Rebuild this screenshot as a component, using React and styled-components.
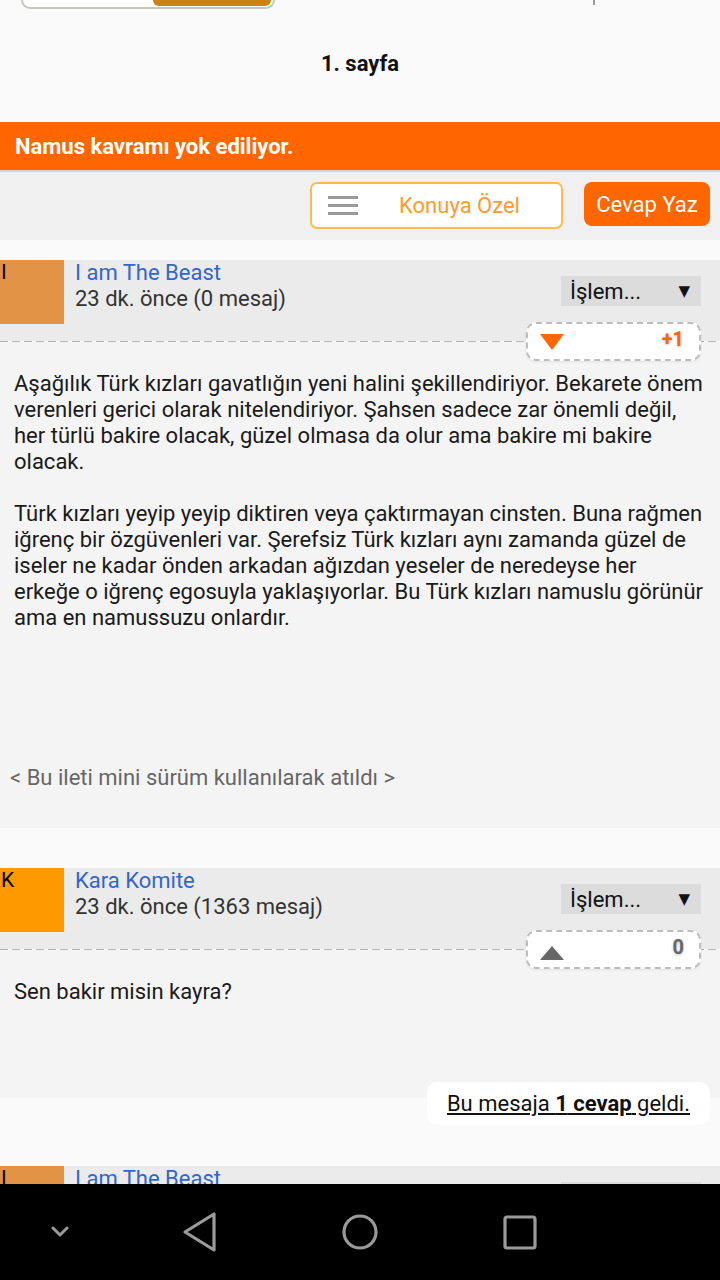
import React from "react";
import styled, { createGlobalStyle } from "styled-components";

const GlobalStyle = createGlobalStyle`
  body {
    margin: 0;
    font-family: Roboto, "Liberation Sans", sans-serif;
    background: #fafafa;
  }
`;

const posts = [
  {
    letter: "I",
    avatar: "#e39346",
    name: "I am The Beast",
    meta: "23 dk. önce (0 mesaj)",
    vote: "+1",
    down: true,
    height: 486,
    paragraphs: [
      "Aşağılık Türk kızları gavatlığın yeni halini şekillendiriyor. Bekarete önem verenleri gerici olarak nitelendiriyor. Şahsen sadece zar önemli değil, her türlü bakire olacak, güzel olmasa da olur ama bakire mi bakire olacak.",
      "Türk kızları yeyip yeyip diktiren veya çaktırmayan cinsten. Buna rağmen iğrenç bir özgüvenleri var. Şerefsiz Türk kızları aynı zamanda güzel de iseler ne kadar önden arkadan ağızdan yeseler de neredeyse her erkeğe o iğrenç egosuyla yaklaşıyorlar. Bu Türk kızları namuslu görünür ama en namussuzu onlardır.",
    ],
    footer: "< Bu ileti mini sürüm kullanılarak atıldı >",
  },
  {
    letter: "K",
    avatar: "#ff9900",
    name: "Kara Komite",
    meta: "23 dk. önce (1363 mesaj)",
    vote: "0",
    down: false,
    height: 148,
    paragraphs: ["Sen bakir misin kayra?"],
    replies: 1,
  },
  {
    letter: "I",
    avatar: "#e39346",
    name: "I am The Beast",
    meta: "23 dk. önce (0 mesaj)",
    vote: "0",
    down: false,
    height: 148,
    paragraphs: [],
  },
];

function App() {
  return (
    <Screen>
      <GlobalStyle />
      <Content>
        <PagerRow>
          <Pager>
            <PagerActive />
          </Pager>
          <PagerTick />
        </PagerRow>
        <PageLabel>1. sayfa</PageLabel>
        <TitleBar>Namus kavramı yok ediliyor.</TitleBar>
        <Toolbar>
          <TopicButton>
            <Burger>
              <span />
              <span />
              <span />
            </Burger>
            <TopicLabel>Konuya Özel</TopicLabel>
          </TopicButton>
          <ReplyButton>Cevap Yaz</ReplyButton>
        </Toolbar>

        <PostList>
          {posts.map((p, i) => (
            <Post key={i}>
              <PostHeader>
                <Avatar color={p.avatar}>{p.letter}</Avatar>
                <Info>
                  <Name>{p.name}</Name>
                  <Meta>{p.meta}</Meta>
                </Info>
                <Actions>
                  <Select>
                    <span>İşlem...</span>
                    <Caret>▼</Caret>
                  </Select>
                  <VoteBox>
                    {p.down ? (
                      <svg width="24" height="16" viewBox="0 0 24 16">
                        <polygon points="0,0 24,0 12,16" fill="#ff6600" />
                      </svg>
                    ) : (
                      <UpArrow width="24" height="14" viewBox="0 0 24 14">
                        <polygon points="12,0 24,14 0,14" fill="#666" />
                      </UpArrow>
                    )}
                    <Score hot={p.down}>{p.vote}</Score>
                  </VoteBox>
                </Actions>
              </PostHeader>
              <Divider />
              <Body style={{ minHeight: p.height }}>
                {p.paragraphs.map((t, j) => (
                  <Paragraph key={j}>{t}</Paragraph>
                ))}
                {p.footer && <Footer>{p.footer}</Footer>}
              </Body>
              {p.replies && (
                <ReplyPill>
                  <span>
                    Bu mesaja <b>{p.replies} cevap</b> geldi.
                  </span>
                </ReplyPill>
              )}
            </Post>
          ))}
        </PostList>
      </Content>

      <NavBar>
        <NavSlot width={120}>
          <svg width="20" height="12" viewBox="0 0 20 12">
            <polyline points="3,2 10,9 17,2" fill="none" stroke="#9a9a9a" strokeWidth="3" strokeLinecap="round" strokeLinejoin="round" />
          </svg>
        </NavSlot>
        <NavSlot width={160}>
          <svg width="36" height="42" viewBox="0 0 36 42">
            <polygon points="3,21 32,3 32,39" fill="none" stroke="#9a9a9a" strokeWidth="3.2" strokeLinejoin="round" />
          </svg>
        </NavSlot>
        <NavSlot width={160}>
          <svg width="38" height="38" viewBox="0 0 38 38">
            <circle cx="19" cy="19" r="16" fill="none" stroke="#9a9a9a" strokeWidth="3.2" />
          </svg>
        </NavSlot>
        <NavSlot width={160}>
          <svg width="34" height="35" viewBox="0 0 34 35">
            <rect x="2" y="2" width="30" height="31" rx="2" fill="none" stroke="#9a9a9a" strokeWidth="3.2" />
          </svg>
        </NavSlot>
      </NavBar>
    </Screen>
  );
}

const Screen = styled.div`
  height: 1280px;
  display: flex;
  flex-direction: column;
  overflow: hidden;
`;

const Content = styled.div`
  flex: 1;
  overflow: hidden;
  background: #fafafa;
`;

const PagerRow = styled.div`
  display: flex;
  align-items: flex-start;
  height: 9px;
`;

const Pager = styled.div`
  margin-left: 21px;
  width: 248px;
  height: 7px;
  border: 2px solid #c9c5c1;
  border-top: none;
  border-radius: 0 0 10px 10px;
  background: #fff;
  display: flex;
  justify-content: flex-end;
  align-items: flex-start;
  padding-right: 2px;
`;

const PagerActive = styled.div`
  width: 118px;
  height: 6px;
  background: #cc8212;
  border-radius: 0 0 9px 9px;
`;

const PagerTick = styled.div`
  margin-left: 318px;
  width: 2px;
  height: 5px;
  background: #9a9a9a;
`;

const PageLabel = styled.div`
  text-align: center;
  font-weight: bold;
  font-size: 22px;
  line-height: 24px;
  color: #111;
  padding: 43px 0 46px;
`;

const TitleBar = styled.div`
  height: 48px;
  display: flex;
  align-items: center;
  padding-left: 15px;
  background: #ff6600;
  color: #fff;
  font-weight: bold;
  font-size: 22px;
`;

const Toolbar = styled.div`
  height: 58px;
  border-top: 2px solid #d2d2d2;
  background: #f0f0f0;
  display: flex;
  justify-content: flex-end;
  align-items: flex-start;
  gap: 21px;
  padding: 10px 10px 0 0;
`;

const TopicButton = styled.div`
  box-sizing: border-box;
  width: 253px;
  height: 47px;
  border: 2px solid #ffbb4d;
  border-radius: 7px;
  background: #fff;
  display: flex;
  align-items: center;
  padding-left: 16px;
`;

const Burger = styled.div`
  width: 30px;
  display: flex;
  flex-direction: column;
  gap: 5px;
  span {
    height: 3px;
    background: #999;
  }
`;

const TopicLabel = styled.div`
  flex: 1;
  text-align: center;
  color: #ff9a2e;
  font-size: 22px;
`;

const ReplyButton = styled.div`
  width: 126px;
  height: 44px;
  border-radius: 8px;
  background: #ff6600;
  color: #fff;
  font-size: 22px;
  display: flex;
  align-items: center;
  justify-content: center;
`;

const PostList = styled.div`
  padding-top: 20px;
`;

const Post = styled.div`
  display: flex;
  flex-direction: column;
  margin-bottom: 40px;
`;

const PostHeader = styled.div`
  height: 81px;
  background: #ebebeb;
  display: flex;
  align-items: flex-start;
`;

const Avatar = styled.div`
  width: 64px;
  height: 64px;
  flex-shrink: 0;
  background: ${(p) => p.color};
  color: #000;
  font-size: 21px;
  line-height: 1;
  padding: 2px 0 0 1px;
  box-sizing: border-box;
`;

const Info = styled.div`
  margin-left: 11px;
  font-size: 22px;
  line-height: 26px;
`;

const Name = styled.div`
  color: #3366cc;
`;

const Meta = styled.div`
  color: #333;
`;

const Actions = styled.div`
  margin-left: auto;
  padding: 16px 19px 0 0;
  display: flex;
  flex-direction: column;
  align-items: flex-end;
  gap: 16px;
`;

const Select = styled.div`
  box-sizing: border-box;
  width: 140px;
  height: 30px;
  background: #dcdcdc;
  display: flex;
  align-items: center;
  justify-content: space-between;
  padding: 0 11px 0 9px;
  font-size: 22px;
  color: #111;
`;

const Caret = styled.span`
  font-family: "DejaVu Sans", sans-serif;
  font-size: 15px;
`;

const VoteBox = styled.div`
  position: relative;
  z-index: 1;
  box-sizing: border-box;
  width: 175px;
  height: 39px;
  border: 2px dashed #bdbdbd;
  border-radius: 10px;
  background: #fff;
  box-shadow: 0 1px 3px rgba(0, 0, 0, 0.08);
  display: flex;
  align-items: center;
  justify-content: space-between;
  padding: 0 15px 0 12px;
`;

const UpArrow = styled.svg`
  margin-top: 6px;
`;

const Score = styled.span`
  font-size: 20px;
  font-weight: bold;
  color: ${(p) => (p.hot ? "#ff6600" : "#666")};
  text-shadow: 0 1px 3px rgba(0, 0, 0, 0.25);
  margin-bottom: 6px;
`;

const Divider = styled.div`
  height: 1px;
  background: repeating-linear-gradient(to right, #b5b5b5 0 8px, transparent 8px 12px);
`;

const Body = styled.div`
  box-sizing: border-box;
  background: #f4f4f4;
  padding: 29px 14px 37px;
  display: flex;
  flex-direction: column;
  font-size: 22px;
  line-height: 26px;
  color: #1a1a1a;
`;

const Paragraph = styled.p`
  margin: 0 0 26px;
  &:last-of-type {
    margin-bottom: 0;
  }
`;

const Footer = styled.div`
  margin: auto 0 0 -4px;
  color: #666;
`;

const ReplyPill = styled.div`
  align-self: flex-end;
  margin: -16px 10px 1px 0;
  height: 43px;
  padding: 0 20px;
  border-radius: 10px;
  background: #fff;
  display: flex;
  align-items: center;
  font-size: 22px;
  color: #111;
  text-decoration: underline;
  b {
    font-weight: bold;
  }
`;

const NavBar = styled.div`
  height: 96px;
  flex-shrink: 0;
  background: #000;
  display: flex;
  align-items: center;
`;

const NavSlot = styled.div`
  width: ${(p) => p.width}px;
  display: flex;
  justify-content: center;
  align-items: center;
`;

export default App;
